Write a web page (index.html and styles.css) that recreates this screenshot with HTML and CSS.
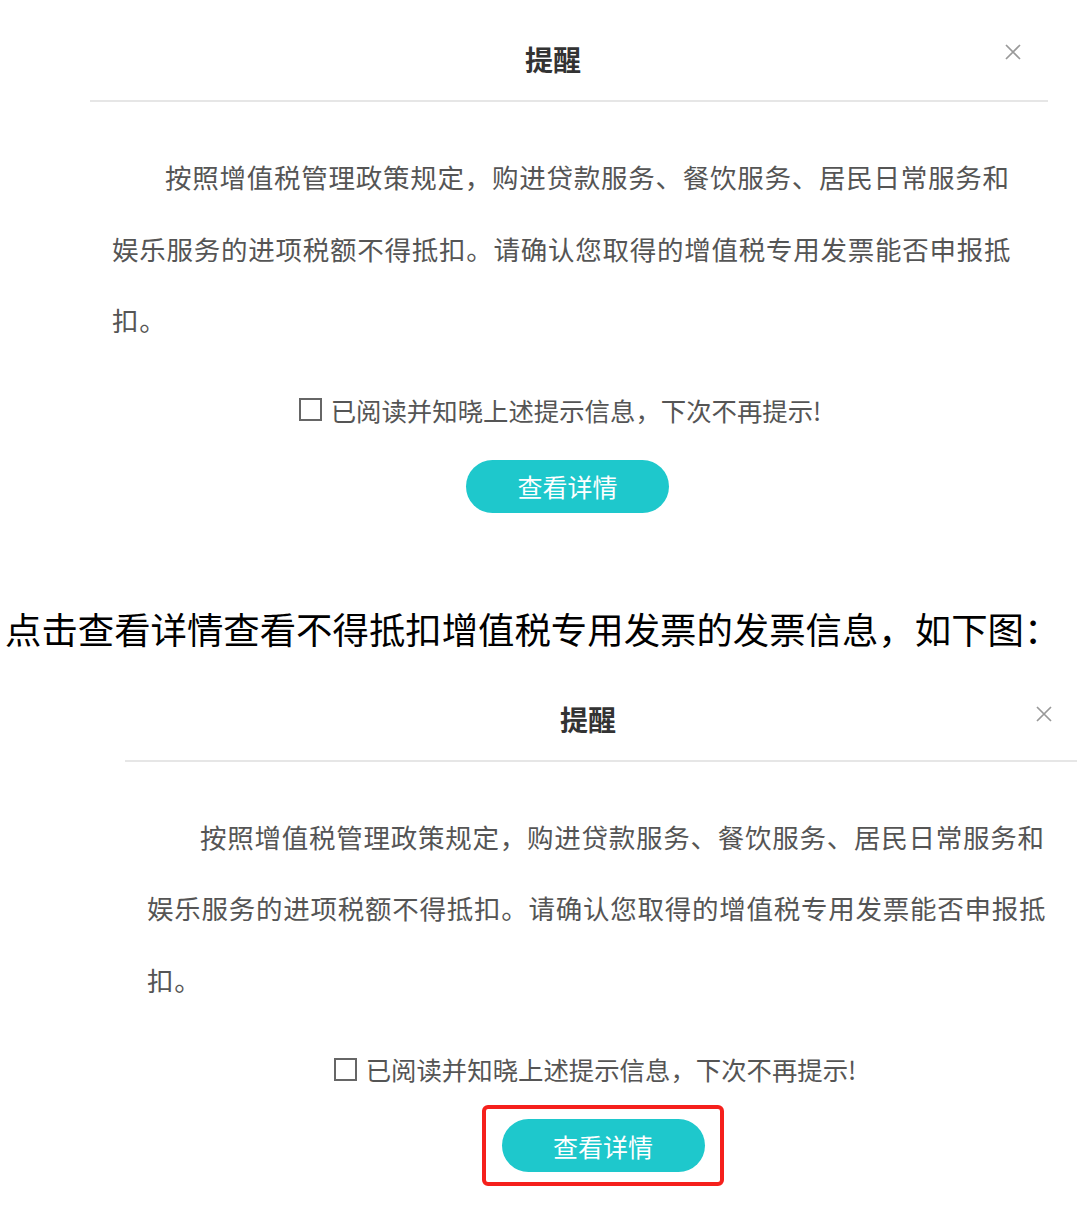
FILE: index.html
```html
<!DOCTYPE html>
<html>
<head>
  <meta charset="utf-8">
  <title>提醒</title>
  <link rel="stylesheet" href="styles.css">
</head>
<body>
  <div class="dialog">
    <div class="dialog-head">
      <h3 class="dialog-title">提醒</h3>
      <span class="close-btn">
        <svg width="16" height="16" viewBox="0 0 16 16"><path d="M1 1 L15 15 M15 1 L1 15" stroke="#999" stroke-width="1.7" fill="none"/></svg>
      </span>
    </div>
    <div class="dialog-body">
      <p class="notice">按照增值税管理政策规定，购进贷款服务、餐饮服务、居民日常服务和<br>娱乐服务的进项税额不得抵扣。请确认您取得的增值税专用发票能否申报抵扣。</p>
      <label class="confirm"><span class="check-box"></span>已阅读并知晓上述提示信息，下次不再提示!</label>
      <div class="actions">
        <button class="detail-btn">查看详情</button>
      </div>
    </div>
  </div>

  <p class="caption">点击查看详情查看不得抵扣增值税专用发票的发票信息，如下图：</p>

  <div class="dialog dialog-shifted">
    <div class="dialog-head">
      <h3 class="dialog-title">提醒</h3>
      <span class="close-btn">
        <svg width="16" height="16" viewBox="0 0 16 16"><path d="M1 1 L15 15 M15 1 L1 15" stroke="#999" stroke-width="1.7" fill="none"/></svg>
      </span>
    </div>
    <div class="dialog-body">
      <p class="notice">按照增值税管理政策规定，购进贷款服务、餐饮服务、居民日常服务和<br>娱乐服务的进项税额不得抵扣。请确认您取得的增值税专用发票能否申报抵扣。</p>
      <label class="confirm"><span class="check-box"></span>已阅读并知晓上述提示信息，下次不再提示!</label>
      <div class="actions actions-marked">
        <span class="highlight"><button class="detail-btn">查看详情</button></span>
      </div>
    </div>
  </div>
</body>
</html>
```

FILE: styles.css
```css
html, body { overflow-x: hidden; }
body { margin: 0; background: #fff; font-family: "Noto Sans CJK SC", "Microsoft YaHei", sans-serif; }

.dialog { position: relative; width: 958px; margin-left: 90px; padding-bottom: 47px; }
.dialog-shifted { margin-left: 125px; }

.dialog-head { padding: 38px 32px 20px 0; border-bottom: 2px solid #e6e6e6; }
.dialog-title { margin: 0; font-size: 28px; line-height: 42px; font-weight: bold; text-align: center; color: #333; }
.close-btn { position: absolute; top: 44px; right: 27px; width: 16px; height: 16px; }
.close-btn svg { display: block; }
.dialog-shifted .close-btn { top: 46px; right: 31px; }

.dialog-body { padding: 39px 21px 0 22px; }
.notice { margin: 0; font-size: 26.5px; line-height: 71.5px; letter-spacing: 0.75px; text-indent: 2em; color: #555; }

.confirm { display: flex; align-items: center; justify-content: center; margin-top: 39px; padding-right: 19px; font-size: 25.4px; line-height: 30px; color: #555; }
.check-box { width: 19px; height: 19px; border: 2px solid #666; margin-right: 9px; }

.actions { display: flex; justify-content: center; margin-top: 35px; padding-right: 4px; }
.actions-marked { margin-top: 21px; }
.detail-btn { width: 203px; height: 53px; padding: 0; border: none; border-radius: 27px; background: #1ec8cc; color: #fff; font-family: inherit; font-size: 25px; cursor: pointer; }
.highlight { display: inline-block; padding: 10px 15px 10px 16px; border: 4px solid #f5201c; border-radius: 6px; line-height: 0; }

.caption { margin: 44px 0 8px 0; padding-left: 5px; font-size: 36.4px; line-height: 48px; color: #000; white-space: nowrap; }
```
